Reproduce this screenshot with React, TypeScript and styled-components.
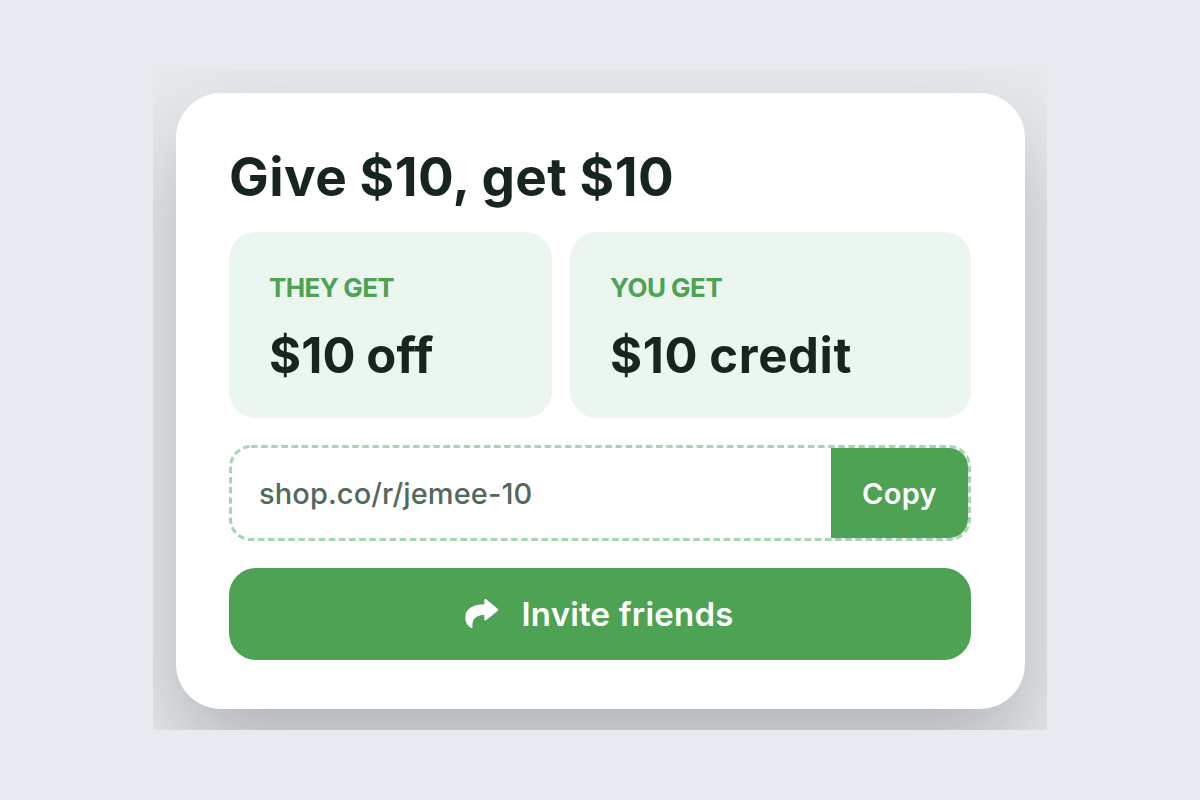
import styled, { createGlobalStyle } from 'styled-components';

const rewards = [
	{ label: 'THEY GET', value: '$10 off', width: 323, labelSpacing: -0.6, valueSpacing: 0.2 },
	{ label: 'YOU GET', value: '$10 credit', width: 401, labelSpacing: -0.4, valueSpacing: 0.7 },
];

export default function App() {
	return (
		<>
			<GlobalStyle />
			<Page>
				<Stage>
					<Card>
						<Title>Give $10, get $10</Title>
						<Rewards>
							{rewards.map(r => (
								<Reward key={r.label} $width={r.width}>
									<RewardLabel $spacing={r.labelSpacing}>{r.label}</RewardLabel>
									<RewardValue $spacing={r.valueSpacing}>{r.value}</RewardValue>
								</Reward>
							))}
						</Rewards>
						<LinkBox>
							<LinkText>shop.co/r/jemee-10</LinkText>
							<CopyButton>
								<span>Copy</span>
							</CopyButton>
							<DashedOutline />
						</LinkBox>
						<InviteButton>
							<ShareArrow />
							<span>Invite friends</span>
						</InviteButton>
					</Card>
				</Stage>
			</Page>
		</>
	);
}

function DashedOutline() {
	return (
		<Outline width='742' height='96' viewBox='0 0 742 96' fill='none'>
			<rect
				x='1.5'
				y='1.5'
				width='739'
				height='93'
				rx='20.5'
				stroke='#a5d5b4'
				strokeWidth='3'
				strokeDasharray='6.6 3.525'
			/>
		</Outline>
	);
}

function ShareArrow() {
	return (
		<svg width='34' height='31' viewBox='0 0 34 31' fill='currentColor' stroke='currentColor'>
			<path
				d='M20.4 2.1v5.3C8.4 7.4 1.4 11.8 1.4 19.2c0 4.4 2.4 8.1 5 9.7-.9-7.2 3.2-13.3 14-13.3v5.9l11.8-9.7z'
				strokeWidth='2.2'
				strokeLinejoin='round'
			/>
		</svg>
	);
}

const GlobalStyle = createGlobalStyle`
	* {
		box-sizing: border-box;
	}

	body {
		margin: 0;
		background-color: #e7ebf0;
		font-family: Inter, 'Liberation Sans', sans-serif;
	}

	button {
		border: 0;
		padding: 0;
		font-family: inherit;
		cursor: pointer;
	}
`;

const Page = styled.main`
	height: 800px;
	display: flex;
	align-items: center;
	justify-content: center;
`;

const Stage = styled.section`
	width: 894px;
	height: 660px;
	padding: 22.5px;
	background-color: #e7eaed;
	overflow: hidden;
`;

const Card = styled.div`
	width: 849px;
	height: 616.5px;
	padding: 53.5px;
	border-radius: 45px;
	background-color: #fff;
	box-shadow: 0 45px 90px rgba(0, 0, 0, 0.23);
`;

const Title = styled.h1`
	margin: 0 0 22px;
	height: 64px;
	line-height: 62px;
	font-size: 53px;
	font-weight: 700;
	letter-spacing: 0.4px;
	word-spacing: -0.5px;
	white-space: nowrap;
	color: #16261e;
`;

const Rewards = styled.div`
	display: flex;
	gap: 18px;
	margin-bottom: 27.5px;
`;

const Reward = styled.div<{ $width: number }>`
	width: ${p => p.$width}px;
	height: 185.5px;
	padding: 39px 40px;
	border-radius: 27px;
	background-color: #ebf6ee;
	white-space: nowrap;
`;

const RewardLabel = styled.div<{ $spacing: number }>`
	height: 34px;
	line-height: 34px;
	font-size: 26px;
	font-weight: 650;
	letter-spacing: ${p => p.$spacing}px;
	word-spacing: -0.5px;
	color: #4da253;
`;

const RewardValue = styled.div<{ $spacing: number }>`
	margin-top: 20px;
	line-height: 62px;
	font-size: 49px;
	font-weight: 700;
	letter-spacing: ${p => p.$spacing}px;
	word-spacing: -1.5px;
	color: #16261e;
`;

const LinkBox = styled.div`
	position: relative;
	display: flex;
	height: 96px;
	margin-bottom: 27px;
	padding: 3px;
`;

const Outline = styled.svg`
	position: absolute;
	inset: 0;
	pointer-events: none;
`;

const LinkText = styled.div`
	flex: 1;
	padding-left: 27px;
	line-height: 91px;
	font-size: 29px;
	font-weight: 500;
	letter-spacing: 0.1px;
	color: #52695e;
`;

const CopyButton = styled.button`
	width: 137px;
	border-radius: 0 19px 19px 0;
	background-color: #4da253;
	color: #fff;
	font-size: 29px;
	font-weight: 600;
	letter-spacing: 0.3px;
`;

const InviteButton = styled.button`
	display: flex;
	align-items: center;
	justify-content: center;
	gap: 22px;
	width: 100%;
	height: 91.5px;
	padding-right: 1px;
	border-radius: 27px;
	background-color: #4da253;
	color: #fff;
	font-size: 33px;
	font-weight: 600;
	letter-spacing: 0.2px;
`;
